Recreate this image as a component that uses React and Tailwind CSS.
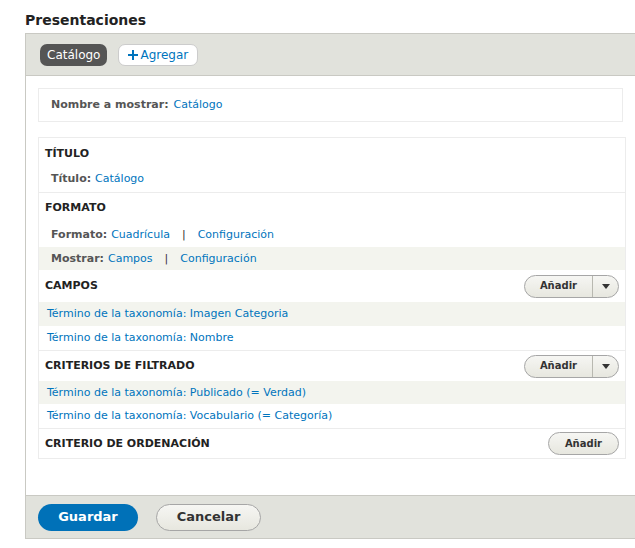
export default function App() {
  const F = { fontFamily: '"DejaVu Sans", Verdana, sans-serif' };
  const link = "text-[#0074bd]";
  const Btn = ({ drop }) => (
    <div className="flex h-[23px] items-stretch rounded-full border border-[#a6a6a6] bg-gradient-to-b from-[#f6f6f3] to-[#e7e7df] text-[10px] font-bold text-[#333]">
      <span className={`flex items-center ${drop ? "px-[15px]" : "px-[16px]"}`}>Añadir</span>
      {drop && (
        <span className="flex w-[26px] items-center justify-center border-l border-[#b8b8b0]">
          <svg width="8" height="5" viewBox="0 0 8 5"><path d="M0 0h8L4 5z" fill="#333" /></svg>
        </span>
      )}
    </div>
  );
  return (
    <div style={F} className="h-[548px] w-[635px] overflow-hidden bg-white text-[11px] leading-[14px] text-[#333]">
      <h2 className="pl-[25px] pt-[10px] text-[14px] font-bold leading-[20px] text-[#222]">Presentaciones</h2>
      <div className="mt-[3px] ml-[25px] border border-r-0 border-[#c9c9c3]">
        <div className="flex h-[42px] items-center gap-[11px] border-b border-[#c9c9c3] bg-[#e1e2dc] pl-[14px]">
          <span className="rounded-[7px] bg-[#555] px-[7px] py-[4px] text-[12px] text-white">Catálogo</span>
          <span className="flex items-center gap-[2px] rounded-[7px] border border-[#ccc] bg-white px-[9px] py-[3px] text-[12px] text-[#0074bd]">
            <svg width="10" height="10" viewBox="0 0 10 10"><path d="M4 0h2v4h4v2H6v4H4V6H0V4h4z" fill="#0074bd" /></svg>
            Agregar
          </span>
        </div>
        <div className="px-[12px] pt-[12px] pb-[36px]">
          <div className="flex h-[34px] items-center border border-[#ececec] pl-[12px]">
            <b className="mr-[5px] text-[#555]">Nombre a mostrar:</b>
            <span className={link}>Catálogo</span>
          </div>
          <div className="mt-[15px] mr-[-3px] border border-[#ececec]">
            <div className="flex h-[27px] items-center px-[6px] pt-[4px] font-bold text-[#222]">TÍTULO</div>
            <div className="flex h-[28px] items-center border-b border-[#ececec] px-[12px]"><b className="mr-[4px] text-[#555]">Título:</b><span className={link}>Catálogo</span></div>
            <div className="flex h-[29px] items-center px-[6px] font-bold text-[#222]">FORMATO</div>
            <div className="flex h-[25px] items-center px-[12px]"><b className="mr-[4px] text-[#555]">Formato:</b><span className={link}>Cuadrícula</span><span className="mx-[12px]">|</span><span className={link}>Configuración</span></div>
            <div className="flex h-[23px] items-center bg-[#f3f4ee] px-[12px]"><b className="mr-[4px] text-[#555]">Mostrar:</b><span className={link}>Campos</span><span className="mx-[12px]">|</span><span className={link}>Configuración</span></div>
            <div className="flex h-[32px] items-center justify-between px-[6px]"><b className="text-[#222]">CAMPOS</b><Btn drop /></div>
            <div className={`flex h-[24px] items-center bg-[#f3f4ee] px-[8px] ${link}`}>Término de la taxonomía: Imagen Categoria</div>
            <div className={`flex h-[25px] items-center border-b border-[#ececec] px-[8px] ${link}`}>Término de la taxonomía: Nombre</div>
            <div className="flex h-[30px] items-center justify-between px-[6px]"><b className="text-[#222]">CRITERIOS DE FILTRADO</b><Btn drop /></div>
            <div className={`flex h-[23px] items-center bg-[#f3f4ee] px-[8px] ${link}`}>Término de la taxonomía: Publicado (= Verdad)</div>
            <div className={`flex h-[25px] items-center border-b border-[#ececec] px-[8px] ${link}`}>Término de la taxonomía: Vocabulario (= Categoría)</div>
            <div className="flex h-[29px] items-center justify-between px-[6px]"><b className="text-[#222]">CRITERIO DE ORDENACIÓN</b><Btn /></div>
          </div>
        </div>
        <div className="flex h-[43px] items-center gap-[18px] border-t border-[#c9c9c3] bg-[#e1e2dc] pl-[12px]">
          <span className="flex h-[27px] w-[100px] items-center justify-center rounded-full bg-[#0071b8] text-[13px] font-bold text-white">Guardar</span>
          <span className="flex h-[27px] w-[105px] items-center justify-center rounded-full border border-[#a6a6a6] bg-gradient-to-b from-[#f6f6f3] to-[#e7e7df] text-[13px] font-bold text-[#333]">Cancelar</span>
        </div>
      </div>
    </div>
  );
}
